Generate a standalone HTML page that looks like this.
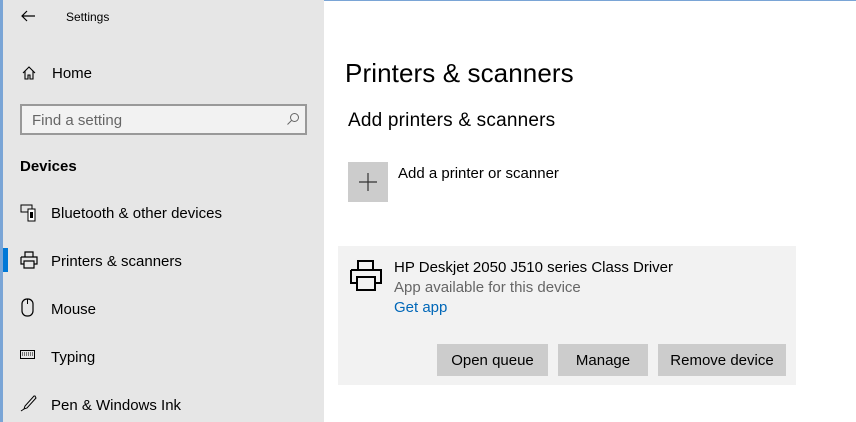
<!DOCTYPE html>
<html><head><style>
body{margin:0;width:856px;height:422px;overflow:hidden;background:#fff;font-family:"Liberation Sans",sans-serif;position:relative;color:#000}
.a{position:absolute;white-space:nowrap}
#side{position:absolute;left:0;top:0;width:324px;height:422px;background:#e6e6e6;border-left:3px solid #7aa5d6;box-sizing:border-box}
.nav{font-size:15px;color:#000}
.btn{position:absolute;top:344px;height:32px;background:#ccc;font-size:15px;text-align:center;line-height:33px}
</style></head><body>
<div style="position:absolute;left:0;top:0;width:856px;height:1px;background:#7aa5d6"></div>
<div id="side"></div>
<svg class="a" style="left:20px;top:9px" width="16" height="14"><path d="M15 7H2M7 2L2 7l5 5" stroke="#000" fill="none" stroke-width="1.2"/></svg>
<div class="a" style="left:66px;top:10px;font-size:12px">Settings</div>
<svg class="a" style="left:21px;top:65px" width="16" height="16"><path d="M2 8L8 2l6 6M4 6v8h3v-4h2v4h3V6" stroke="#000" fill="none" stroke-width="1.1"/></svg>
<div class="a nav" style="left:52px;top:65px">Home</div>
<div class="a" style="left:20px;top:104px;width:287px;height:31px;border:2px solid #999;box-sizing:border-box;background:#f2f2f2"></div>
<div class="a" style="left:32px;top:112px;font-size:15px;color:#666">Find a setting</div>
<svg class="a" style="left:286px;top:112px" width="14" height="14"><circle cx="8.5" cy="5.5" r="4" stroke="#666" fill="none"/><path d="M5.5 8.5L1.5 12.5" stroke="#666"/></svg>
<div class="a" style="left:20px;top:158px;font-size:15px;font-weight:bold">Devices</div>
<svg class="a" style="left:20px;top:204px" width="18" height="18"><rect x="1" y="1" width="11" height="7" fill="none" stroke="#000"/><rect x="8" y="5" width="7" height="12" fill="#fff" stroke="#000"/><rect x="10" y="8" width="3" height="6" fill="#000"/></svg>
<div class="a nav" style="left:51px;top:205px">Bluetooth &amp; other devices</div>
<div class="a" style="left:3px;top:248px;width:5px;height:24px;background:#0078d7"></div>
<svg class="a" style="left:20px;top:251px" width="18" height="18"><path d="M5 6V1h8v5M1 6h16v7h-3M4 13H1V6M4 10h10v7H4z" fill="none" stroke="#000" stroke-width="1.2"/></svg>
<div class="a nav" style="left:51px;top:253px">Printers &amp; scanners</div>
<svg class="a" style="left:21px;top:298px" width="14" height="20"><rect x="1" y="1" width="11" height="17" rx="5" fill="none" stroke="#000" stroke-width="1.2"/><path d="M6.5 1v5" stroke="#000"/></svg>
<div class="a nav" style="left:51px;top:301px">Mouse</div>
<svg class="a" style="left:20px;top:350px" width="16" height="10"><rect x="0.5" y="0.5" width="14" height="8" fill="none" stroke="#000"/><path d="M2 3h11M2 5h11" stroke="#000" stroke-dasharray="1 1"/></svg>
<div class="a nav" style="left:51px;top:349px">Typing</div>
<svg class="a" style="left:20px;top:394px" width="18" height="18"><path d="M15 2l1 2-9 10-3 1 1-3 9-10zM4 15l-3 2" fill="none" stroke="#000"/></svg>
<div class="a nav" style="left:51px;top:397px">Pen &amp; Windows Ink</div>

<div class="a" style="left:345px;top:58px;font-size:26px;letter-spacing:0.1px">Printers &amp; scanners</div>
<div class="a" style="left:348px;top:110px;font-size:19px;letter-spacing:0.2px">Add printers &amp; scanners</div>
<div class="a" style="left:348px;top:162px;width:40px;height:40px;background:#ccc"></div>
<svg class="a" style="left:358px;top:172px" width="20" height="20"><path d="M10 1v18M1 10h18" stroke="#333" stroke-width="1.2"/></svg>
<div class="a" style="left:398px;top:165px;font-size:15px">Add a printer or scanner</div>
<div class="a" style="left:338px;top:246px;width:458px;height:139px;background:#f2f2f2"></div>
<svg class="a" style="left:349px;top:259px" width="34" height="34"><path d="M9 11V2h15v9M2 11h30v13h-6M8 24H2V11M8 18h18v13H8z" fill="none" stroke="#000" stroke-width="2"/></svg>
<div class="a" style="left:394px;top:259px;font-size:15px">HP Deskjet 2050 J510 series Class Driver</div>
<div class="a" style="left:394px;top:279px;font-size:15px;color:#666">App available for this device</div>
<div class="a" style="left:394px;top:299px;font-size:15px;color:#0067b8">Get app</div>
<div class="btn" style="left:437px;width:111px">Open queue</div>
<div class="btn" style="left:558px;width:90px">Manage</div>
<div class="btn" style="left:658px;width:128px">Remove device</div>
</body></html>
